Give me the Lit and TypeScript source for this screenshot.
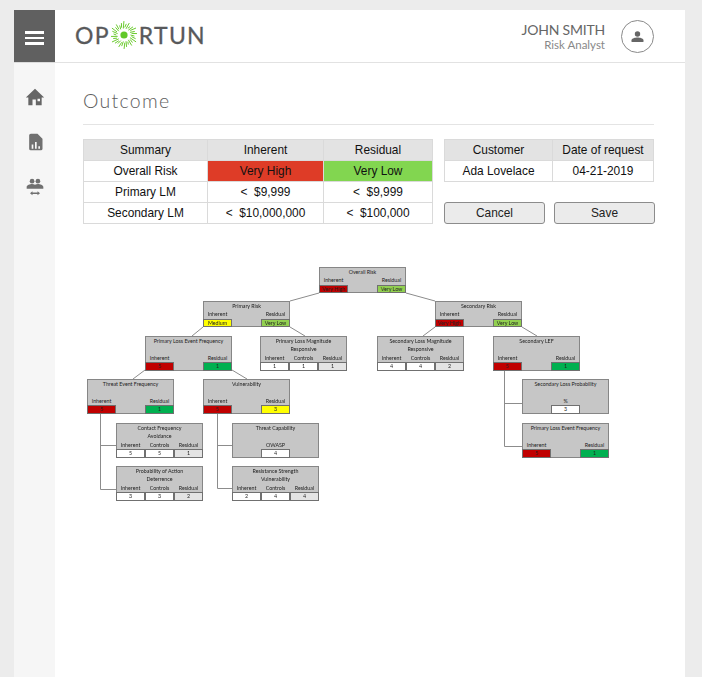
import { LitElement, html, css, svg } from 'lit';
import { customElement } from 'lit/decorators.js';

type Cell = { label: string; value: string; tone: string };
type TreeNode = { x: number; y: number; title: string; sub?: string; cells: Cell[] };

const twoCells = (a: string, aTone: string, b: string, bTone: string): Cell[] => [
  { label: 'Inherent', value: a, tone: aTone },
  { label: 'Residual', value: b, tone: bTone },
];
const threeCells = (a: string, b: string, c: string): Cell[] => [
  { label: 'Inherent', value: a, tone: 'white' },
  { label: 'Controls', value: b, tone: 'white' },
  { label: 'Residual', value: c, tone: 'pale' },
];

const NODES: TreeNode[] = [
  { x: 236, y: 7, title: 'Overall Risk', cells: twoCells('Very High', 'red', 'Very Low', 'lime') },
  { x: 120, y: 41, title: 'Primary Risk', cells: twoCells('Medium', 'yellow', 'Very Low', 'lime') },
  { x: 352, y: 41, title: 'Secondary Risk', cells: twoCells('Very High', 'red', 'Very Low', 'lime') },
  { x: 62, y: 76, title: 'Primary Loss Event Frequency', sub: '', cells: twoCells('5', 'red', '1', 'green') },
  { x: 177, y: 76, title: 'Primary Loss Magnitude', sub: 'Responsive', cells: threeCells('1', '1', '1') },
  { x: 294, y: 76, title: 'Secondary Loss Magnitude', sub: 'Responsive', cells: threeCells('4', '4', '2') },
  { x: 410, y: 76, title: 'Secondary LEF', sub: '', cells: twoCells('5', 'red', '1', 'green') },
  { x: 4, y: 119, title: 'Threat Event Frequency', sub: '', cells: twoCells('5', 'red', '1', 'green') },
  { x: 120, y: 119, title: 'Vulnerability', sub: '', cells: twoCells('5', 'red', '3', 'yellow') },
  { x: 33, y: 163, title: 'Contact Frequency', sub: 'Avoidance', cells: threeCells('5', '5', '1') },
  { x: 33, y: 206, title: 'Probability of Action', sub: 'Deterrence', cells: threeCells('3', '3', '2') },
  { x: 149, y: 163, title: 'Threat Capability', sub: '', cells: [{ label: 'OWASP', value: '4', tone: 'white' }] },
  { x: 149, y: 206, title: 'Resistance Strength', sub: 'Vulnerability', cells: threeCells('2', '4', '4') },
  { x: 439, y: 119, title: 'Secondary Loss Probability', sub: '', cells: [{ label: '%', value: '3', tone: 'white' }] },
  { x: 439, y: 163, title: 'Primary Loss Event Frequency', sub: '', cells: twoCells('5', 'red', '1', 'green') },
];

const LINKS = [
  'M236 33 207 41', 'M323 33 352 41',
  'M120 67 109 76', 'M207 67 222 76',
  'M352 67 340 76', 'M439 67 454 76',
  'M62 110 50 119', 'M149 110 164 119',
  'M17.5 154V229.5H33M17.5 185.5H33',
  'M134.5 154V228.5H149M134.5 185.5H149',
  'M421.5 110V186.5H439M421.5 143.5H439',
];

// rays of the logo sun, lengths vary a bit so it looks hand drawn
const RAYS = Array.from({ length: 30 }, (_, i) => {
  const a = (i / 30) * Math.PI * 2;
  const inner = 6.5 + (i % 2) * 1.2;
  const outer = 10.5 + ((i * 7) % 5) * 0.85;
  return {
    x1: 14 + Math.cos(a) * inner,
    y1: 14 + Math.sin(a) * inner,
    x2: 14 + Math.cos(a + 0.1) * outer,
    y2: 14 + Math.sin(a + 0.1) * outer,
  };
});

@customElement('app-root')
export class AppRoot extends LitElement {
  static styles = css`
    :host {
      display: block;
      box-sizing: border-box;
      height: 677px;
      padding: 10px 17px 0 14px;
      overflow: hidden;
      background: #ececec;
      font-family: "Liberation Sans", Arial, sans-serif;
      color: #111;
    }
    .card {
      height: 100%;
      background: #fff;
      display: grid;
      grid-template-columns: 41px minmax(0, 1fr);
      grid-template-rows: 53px 1fr;
      filter: blur(0.25px);
    }
    .menu {
      background: #606060;
      border-bottom: 1px solid #dcdcdc;
      display: flex;
      flex-direction: column;
      justify-content: center;
      align-items: center;
      gap: 3px;
      padding-top: 4px;
    }
    .menu span {
      width: 19px;
      height: 2.5px;
      background: #fff;
    }
    .header {
      border-bottom: 1px solid #e2e2e2;
      display: flex;
      align-items: center;
      justify-content: space-between;
      padding: 0 31px 0 20px;
    }
    .logo {
      display: flex;
      align-items: center;
      margin-bottom: 2px;
      font-family: Lato, sans-serif;
      font-size: 23px;
      letter-spacing: 1.3px;
      color: #58595b;
      -webkit-text-stroke: 0.3px #58595b;
      line-height: 1;
    }
    .logo svg {
      margin: 0 1px 0 0;
    }
    .user {
      display: flex;
      align-items: center;
      gap: 16px;
    }
    .who {
      text-align: right;
      font-family: Lato, sans-serif;
      color: #666;
    }
    .who .name {
      font-size: 14px;
      letter-spacing: -0.2px;
      line-height: 17px;
    }
    .who .role {
      font-size: 11.5px;
      line-height: 14px;
      color: #888;
    }
    .avatar {
      width: 33px;
      height: 33px;
      box-sizing: border-box;
      border: 1px solid #8a8a8a;
      border-radius: 50%;
      display: flex;
      align-items: center;
      justify-content: center;
    }
    .side {
      background: #f6f6f6;
      display: flex;
      flex-direction: column;
      align-items: center;
      gap: 25px;
      padding-top: 24px;
    }
    .side svg {
      display: block;
    }
    .main {
      padding: 0 31px 0 28px;
    }
    h1 {
      margin: 0;
      padding: 26px 0 12px;
      font-family: Lato, sans-serif;
      font-weight: 300;
      font-size: 19.5px;
      letter-spacing: 1.3px;
      line-height: 23px;
      color: #5e5e5e;
      border-bottom: 1px solid #e4e4e4;
    }
    .top {
      display: flex;
      gap: 11px;
      margin-top: 14px;
    }
    table {
      border-collapse: separate;
      border-spacing: 0;
      table-layout: fixed;
      font-size: 11.9px;
      border-top: 1px solid #dadada;
      border-left: 1px solid #dadada;
    }
    th, td {
      height: 21px;
      padding: 0;
      box-sizing: border-box;
      text-align: center;
      font-weight: 400;
      border-right: 1px solid #dadada;
      border-bottom: 1px solid #dadada;
    }
    th {
      background: #e3e3e3;
    }
    .high {
      background: #de3c27;
    }
    .low {
      background: #82d650;
    }
    .wide {
      width: 350px;
    }
    .narrow {
      width: 210px;
    }
    .aside {
      display: flex;
      flex-direction: column;
      gap: 20px;
    }
    .actions {
      display: flex;
      gap: 9px;
    }
    button {
      width: 101px;
      height: 22px;
      padding: 0;
      font: inherit;
      font-size: 11.9px;
      color: #222;
      background: #ebebeb;
      border: 1px solid #8c8c8c;
      border-radius: 3px;
    }
    .tree {
      position: relative;
      margin-top: 36px;
      height: 250px;
      filter: blur(0.3px);
      font-family: Lato, sans-serif;
      font-size: 5.3px;
      color: #222;
    }
    .links {
      position: absolute;
      inset: 0;
    }
    .node {
      position: absolute;
      width: 87px;
      box-sizing: border-box;
      background: #c6c6c6;
      border: 1px solid #868686;
      text-align: center;
      line-height: 8.4px;
    }
    .row {
      height: 8.4px;
    }
    .cells {
      display: flex;
      justify-content: space-between;
      margin: 0 -1px -1px;
    }
    .cells.single {
      justify-content: center;
    }
    .cell {
      flex: 0 0 29px;
    }
    .value {
      height: 8.7px;
      box-sizing: border-box;
      border: 0.6px solid #707070;
      line-height: 7.5px;
    }
    .value.red { background: #c00000; }
    .value.green { background: #00b050; }
    .value.yellow { background: #ffff00; }
    .value.lime { background: #92d050; }
    .value.white { background: #fff; }
    .value.pale { background: #e4e4e4; }
  `;

  renderNode(n: TreeNode) {
    return html`
      <div class="node" style="left:${n.x}px;top:${n.y}px">
        <div class="row">${n.title}</div>
        ${n.sub !== undefined ? html`<div class="row">${n.sub}</div>` : ''}
        <div class="cells ${n.cells.length === 1 ? 'single' : ''}">
          ${n.cells.map(c => html`
            <div class="cell">
              <div class="row">${c.label}</div>
              <div class="value ${c.tone}">${c.value}</div>
            </div>
          `)}
        </div>
      </div>
    `;
  }

  render() {
    return html`
      <div class="card">
        <div class="menu"><span></span><span></span><span></span></div>
        <div class="header">
          <div class="logo">
            OP
            <svg width="28" height="28" viewBox="0 0 28 28">
              <circle cx="14" cy="14" r="3.6" fill="#62c82a"></circle>
              ${RAYS.map(r => svg`<line x1=${r.x1} y1=${r.y1} x2=${r.x2} y2=${r.y2} stroke="#6bcb2e" stroke-width="1"></line>`)}
            </svg>
            RTUN
          </div>
          <div class="user">
            <div class="who">
              <div class="name">JOHN SMITH</div>
              <div class="role">Risk Analyst</div>
            </div>
            <div class="avatar">
              <svg width="13" height="13" viewBox="0 0 24 24" fill="#666">
                <circle cx="12" cy="7.5" r="5"></circle>
                <path d="M1 22v-3c0-3.500 7-5 11-5s11 1.500 11 5v3z"></path>
              </svg>
            </div>
          </div>
        </div>
        <div class="side">
          <svg width="20" height="20" viewBox="0 0 24 24" fill="#666">
            <path fill-rule="evenodd" d="M12 2 1 12.500h3V22h5v-7h4v7h7v-9.500h3zM15 14h3v3h-3z"></path>
          </svg>
          <svg width="20" height="20" viewBox="0 0 24 24" fill="#707070">
            <path fill-rule="evenodd" d="M7 2h8l6 6v12a2 2 0 0 1-2 2H7a2 2 0 0 1-2-2V4a2 2 0 0 1 2-2zM8 15v5h2v-5zM12 12v8h2v-8zM16 17v3h2v-3z"></path>
          </svg>
          <svg width="20" height="20" viewBox="0 0 24 24" fill="#707070">
            <circle cx="8.500" cy="5" r="2.800"></circle>
            <circle cx="15.500" cy="5" r="2.800"></circle>
            <path d="M2 14v-2c0-2 4-3.500 6.500-3.500 1.300 0 2.500.3 3.500.7 1-.4 2.200-.7 3.500-.7 2.500 0 6.500 1.500 6.500 3.500v2z"></path>
            <path d="M6 19.500 9 17v1.600h6V17l3 2.500-3 2.500v-1.600H9V22z"></path>
          </svg>
        </div>
        <div class="main">
          <h1>Outcome</h1>
          <div class="top">
            <table class="wide">
              <colgroup><col style="width:124px"><col style="width:116px"><col style="width:109px"></colgroup>
              <tr><th>Summary</th><th>Inherent</th><th>Residual</th></tr>
              <tr><td>Overall Risk</td><td class="high">Very High</td><td class="low">Very Low</td></tr>
              <tr><td>Primary LM</td><td>&lt;&nbsp; $9,999</td><td>&lt;&nbsp; $9,999</td></tr>
              <tr><td>Secondary LM</td><td>&lt;&nbsp; $10,000,000</td><td>&lt;&nbsp; $100,000</td></tr>
            </table>
            <div class="aside">
              <table class="narrow">
                <colgroup><col style="width:108px"><col style="width:101px"></colgroup>
                <tr><th>Customer</th><th>Date of request</th></tr>
                <tr><td>Ada Lovelace</td><td>04-21-2019</td></tr>
              </table>
              <div class="actions">
                <button>Cancel</button>
                <button>Save</button>
              </div>
            </div>
          </div>
          <div class="tree">
            <svg class="links" width="571" height="250" fill="none" stroke="#8c8c8c">
              ${LINKS.map(d => svg`<path d=${d}></path>`)}
            </svg>
            ${NODES.map(n => this.renderNode(n))}
          </div>
        </div>
      </div>
    `;
  }
}
